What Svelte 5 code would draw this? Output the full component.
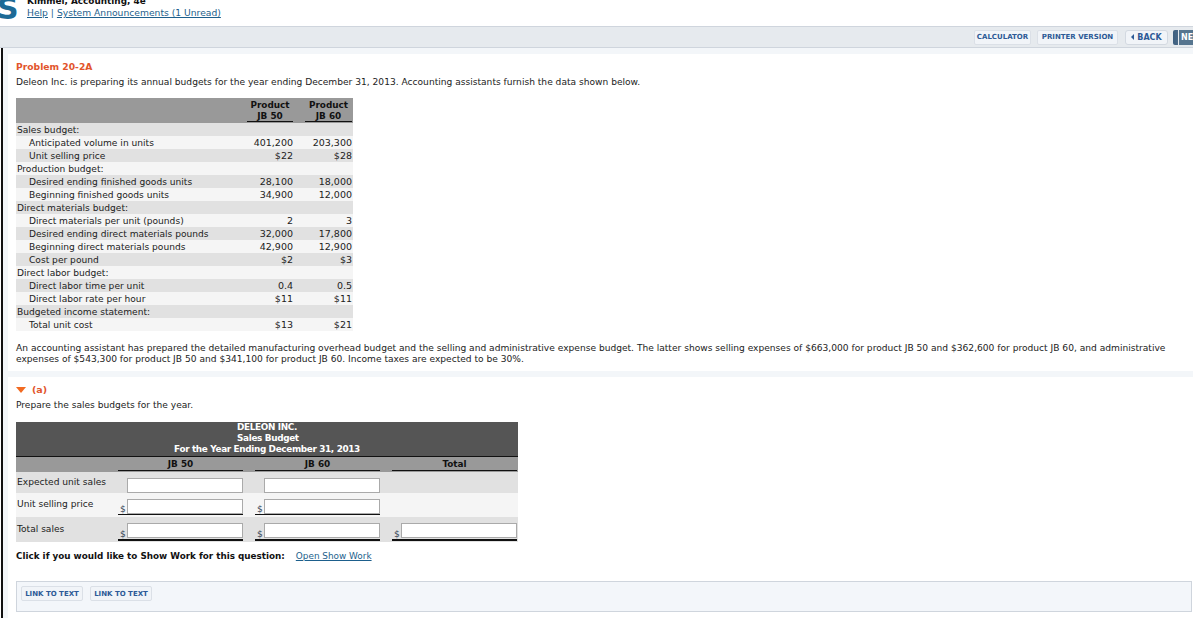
<script>
  const rows = [
    ['Sales budget:', '', '', 0],
    ['Anticipated volume in units', '401,200', '203,300', 1],
    ['Unit selling price', '$22', '$28', 1],
    ['Production budget:', '', '', 0],
    ['Desired ending finished goods units', '28,100', '18,000', 1],
    ['Beginning finished goods units', '34,900', '12,000', 1],
    ['Direct materials budget:', '', '', 0],
    ['Direct materials per unit (pounds)', '2', '3', 1],
    ['Desired ending direct materials pounds', '32,000', '17,800', 1],
    ['Beginning direct materials pounds', '42,900', '12,900', 1],
    ['Cost per pound', '$2', '$3', 1],
    ['Direct labor budget:', '', '', 0],
    ['Direct labor time per unit', '0.4', '0.5', 1],
    ['Direct labor rate per hour', '$11', '$11', 1],
    ['Budgeted income statement:', '', '', 0],
    ['Total unit cost', '$13', '$21', 1]
  ];
</script>

<div class="page">
  <header class="top">
    <div class="logo">S</div>
    <div class="titles">
      <div class="book">Kimmel, Accounting, 4e</div>
      <div class="links"><a href="#h">Help</a> | <a href="#s">System Announcements (1 Unread)</a></div>
    </div>
  </header>

  <nav class="toolbar">
    <button class="tool cal">CALCULATOR</button>
    <button class="tool prn">PRINTER VERSION</button>
    <button class="back"><span class="arrow"></span>BACK</button>
    <button class="next"><span>NEXT</span></button>
  </nav>

  <div class="shell">
    <section class="panel first">
      <h2>Problem 20-2A</h2>
      <p class="intro">Deleon Inc. is preparing its annual budgets for the year ending December 31, 2013. Accounting assistants furnish the data shown below.</p>

      <div class="data">
        <div class="data-head">
          <div></div>
          <div class="hc">Product<u>JB 50</u></div>
          <div></div>
          <div class="hc">Product<u>JB 60</u></div>
        </div>
        {#each rows as r, i}
          <div class="data-row" class:odd={i % 2 === 1}>
            <div class="lab" class:ind={r[3]}>{r[0]}</div>
            <div class="num">{r[1]}</div>
            <div class="num">{r[2]}</div>
          </div>
        {/each}
      </div>

      <p class="para">An accounting assistant has prepared the detailed manufacturing overhead budget and the selling and administrative expense budget. The latter shows selling expenses of $663,000 for product JB 50 and $362,600 for product JB 60, and administrative expenses of $543,300 for product JB 50 and $341,100 for product JB 60. Income taxes are expected to be 30%.</p>
    </section>

    <section class="panel second">
      <div class="part"><span class="tri"></span>(a)</div>
      <p class="prep">Prepare the sales budgets for the year.</p>

      <div class="sheet">
        <div class="title">
          <div class="title-in">
            <div class="tl">DELEON INC.</div>
            <div class="tl">Sales Budget</div>
            <div>For the Year Ending December 31, 2013</div>
          </div>
        </div>
        <div class="cols">
          <div></div><div class="col">JB 50</div><div class="col">JB 60</div><div class="col">Total</div>
        </div>
        <div class="in-row r1">
          <div class="rl">Expected unit sales</div>
          <div class="cell"><input /></div>
          <div class="cell"><input /></div>
          <div class="cell"></div>
        </div>
        <div class="in-row r2">
          <div class="rl">Unit selling price</div>
          <div class="cell line"><span class="d">$</span><input /></div>
          <div class="cell line"><span class="d">$</span><input /></div>
          <div class="cell"></div>
        </div>
        <div class="in-row r3">
          <div class="rl">Total sales</div>
          <div class="cell dbl"><span class="d">$</span><input /></div>
          <div class="cell dbl"><span class="d">$</span><input /></div>
          <div class="cell dbl"><span class="d">$</span><input /></div>
        </div>
      </div>

      <div class="work"><b>Click if you would like to Show Work for this question:</b><a href="#w">Open Show Work</a></div>

      <div class="foot">
        <button class="tool ltt">LINK TO TEXT</button>
        <button class="tool ltt">LINK TO TEXT</button>
      </div>
    </section>
  </div>
</div>

<style>
  :global(body) { margin: 0; background: #fff; }
  .page {
    width: 1193px; height: 618px; overflow: hidden; background: #fff;
    font-family: "DejaVu Sans", Verdana, sans-serif; font-size: 9.1px; line-height: 13px; color: #222;
  }
  a { color: #1d5f8c; }
  .top { height: 26px; display: flex; overflow: hidden; }
  .logo { width: 27px; flex: none; margin-top: -9px; margin-left: -3px; margin-right: 3px; font: bold 30px/36px "DejaVu Sans", sans-serif; color: #1d6a96; }
  .titles { margin-top: -5px; }
  .book { font-weight: bold; font-size: 8.9px; line-height: 13px; color: #111; }
  .links { line-height: 14px; margin-top: -2px; color: #1d5f8c; font-size: 9.2px; }
  .toolbar {
    height: 20px; background: #e6eaee;
    border-top: 1px solid #cfd5dd; border-bottom: 1px solid #cfd5dd;
    display: flex; align-items: center; justify-content: flex-end; overflow: hidden;
  }
  button { font-family: "DejaVu Sans", sans-serif; padding: 0; cursor: pointer; }
  .tool {
    height: 15px; box-sizing: border-box; font-size: 7px; font-weight: bold; color: #2d5a96;
    background: #f1f4f8; border: 1px solid #dbe0e7; border-radius: 2px; white-space: nowrap;
  }
  .cal { width: 57px; margin-right: 6px; }
  .prn { width: 81px; margin-right: 7px; }
  .back {
    width: 43px; height: 15px; box-sizing: border-box; margin-right: 5px; font-size: 8px; font-weight: bold; color: #2d5a96;
    background: #f1f4f8; border: 1px solid #d3d9e1; border-radius: 3px; display: flex; align-items: center; justify-content: center;
  }
  .arrow { width: 0; height: 0; border: 3px solid transparent; border-left: 0; border-right: 3px solid #2d5a96; margin-right: 3px; }
  .next {
    width: 20px; height: 15px; flex: none; border: 0; color: #fff; font-size: 8px; font-weight: bold;
    background: linear-gradient(90deg, #3d5f80, #6b86a0); text-align: left; padding-left: 5px; border-radius: 2px 0 0 2px; overflow: hidden; white-space: nowrap;
  }
  .next span { display: block; height: 15px; line-height: 15px; background: #56758f; border-left: 1px solid #e6eaee; padding-left: 2px; }
  .shell { background: #f3f6f9; margin-left: 1px; border-left: 2px solid #111; padding: 6px 0 0 5px; height: 600px; }
  .panel { background: #fff; padding-left: 8px; }
  .first { height: 317px; box-sizing: border-box; padding-top: 6px; margin-bottom: 6px; }
  h2 { margin: 0; font-size: 9.2px; line-height: 13px; color: #e2552c; font-weight: bold; }
  .intro { margin: 3px 0 0; }
  .data { width: 337px; margin-top: 9px; }
  .data-head { display: grid; grid-template-columns: 231px 46px 12px 47px; height: 25px; background: #999; }
  .hc { text-align: center; font-weight: bold; font-size: 8.9px; line-height: 11px; padding-top: 2px; color: #111; white-space: nowrap; }
  .hc u { display: block; text-decoration: none; border-bottom: 1px solid #111; line-height: 11px; height: 10px; }
  .data-row { display: grid; grid-template-columns: 231px 46px 59px; height: 13px; background: #e1e1e1; }
  .data-row.odd { background: #f5f5f5; }
  .lab { padding-left: 1px; white-space: nowrap; line-height: 14px; height: 13px; }
  .lab.ind { padding-left: 13px; }
  .num { text-align: right; font-size: 9.5px; }
  .para { margin: 12px 0 0; width: 1160px; line-height: 11px; }
  .second { height: 260px; box-sizing: border-box; padding-top: 6px; }
  .part { color: #e2552c; font-weight: bold; font-size: 9.5px; display: flex; align-items: center; height: 13px; }
  .tri { width: 0; height: 0; border: 5px solid transparent; border-top: 6px solid #f26a21; border-bottom: 0; margin-right: 6px; }
  .prep { margin: 3px 0 0; }
  .sheet { width: 502px; margin-top: 10px; }
  .title { background: #555; height: 34px; color: #fff; font-weight: bold; font-size: 8.9px; letter-spacing: -.35px; display: flex; justify-content: center; }
  .title-in { line-height: 11px; white-space: nowrap; }
  .tl { padding-left: 63px; }
  .cols, .in-row { display: grid; grid-template-columns: 102px 125px 12px 125px 12px 125px; padding-right: 1px; }
  .in-row { background: #e1e1e1; }
  .in-row .cell:nth-child(3) { grid-column: 4; }
  .in-row .cell:nth-child(4) { grid-column: 6; }
  .cols { background: #999; height: 16px; box-sizing: border-box; border-top: 1px solid #111; font-weight: bold; font-size: 8.9px; color: #111; }
  .cols .col:nth-child(3) { grid-column: 4; }
  .cols .col:nth-child(4) { grid-column: 6; }
  .col { text-align: center; border-bottom: 1px solid #111; height: 13px; line-height: 14px; }
  .r1 { height: 21px; }
  .r2 { height: 24px; background: #f5f5f5; }
  .r3 { height: 25px; }
  .rl { padding-left: 1px; white-space: nowrap; }
  .r1 .rl { padding-top: 4px; }
  .r2 .rl { padding-top: 5px; }
  .r3 .rl { padding-top: 6px; }
  .cell { display: flex; align-items: flex-end; justify-content: flex-end; position: relative; box-sizing: border-box; }
  .cell.line { height: 22px; border-bottom: 1px solid #111; }
  .cell.dbl { height: 24px; border-bottom: 2px solid #111; padding-bottom: 1px; }
  input { width: 116px; height: 15px; box-sizing: border-box; border: 1px solid #aaa; background: #fff; padding: 0; margin: 0; display: block; }
  .d { position: absolute; left: 2px; bottom: 0; font-size: 9px; line-height: 10px; color: #345; }
  .work { margin-top: 8px; display: flex; gap: 11px; }
  .work b { font-size: 8.8px; color: #111; }
  .work a { font-size: 8.9px; }
  .foot { margin-top: 18px; width: 1176px; height: 31px; box-sizing: border-box; background: #f3f6fa; border: 1px solid #cfd5dd; padding: 4px 0 0 4px; display: flex; align-items: flex-start; gap: 7px; }
  .ltt { width: 62px; }
</style>
